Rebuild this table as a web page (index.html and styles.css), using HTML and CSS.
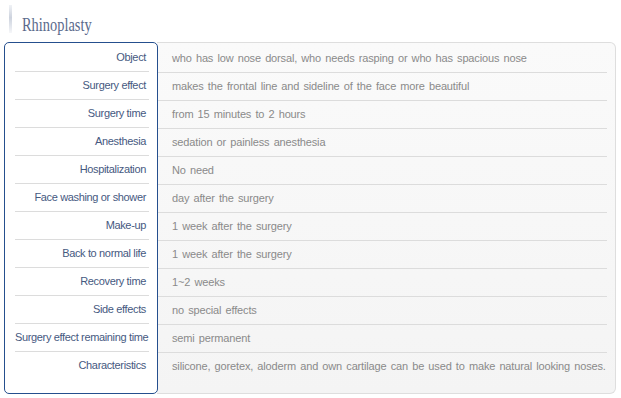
FILE: index.html
```html
<!DOCTYPE html>
<html>
<head>
<meta charset="utf-8">
<link rel="stylesheet" href="styles.css">
</head>
<body>
<div class="page">
  <h2 class="title"><span class="accent"></span><span class="title-text">Rhinoplasty</span></h2>
  <div class="table">
    <ul class="labels">
      <li>Object</li>
      <li>Surgery effect</li>
      <li>Surgery time</li>
      <li>Anesthesia</li>
      <li>Hospitalization</li>
      <li>Face washing or shower</li>
      <li>Make-up</li>
      <li>Back to normal life</li>
      <li>Recovery time</li>
      <li>Side effects</li>
      <li>Surgery effect remaining time</li>
      <li>Characteristics</li>
    </ul>
    <ul class="values">
      <li>who has low nose dorsal, who needs rasping or who has spacious nose</li>
      <li>makes the frontal line and sideline of the face more beautiful</li>
      <li>from 15 minutes to 2 hours</li>
      <li>sedation or painless anesthesia</li>
      <li>No need</li>
      <li>day after the surgery</li>
      <li>1 week after the surgery</li>
      <li>1 week after the surgery</li>
      <li>1~2 weeks</li>
      <li>no special effects</li>
      <li>semi permanent</li>
      <li>silicone, goretex, aloderm and own cartilage can be used to make natural looking noses.</li>
    </ul>
  </div>
</div>
</body>
</html>
```

FILE: styles.css
```css
html, body {
  margin: 0;
  padding: 0;
  background: #ffffff;
}
.page {
  width: 621px;
  height: 398px;
  padding: 5px 0 0 4px;
  box-sizing: border-box;
}
.title {
  margin: 0;
  height: 37px;
  display: flex;
  align-items: flex-start;
  font-family: "Liberation Serif", serif;
  font-weight: normal;
  font-size: 18px;
  line-height: 20px;
  color: #5b6a8c;
}
.accent {
  width: 3px;
  height: 28px;
  margin: 0 10px 0 5px;
  background: linear-gradient(to bottom, #f0f2f6, #cdd3de 45%, #e6e9ef 80%, #f6f7f9);
}
.title-text {
  display: inline-block;
  padding-top: 10px;
  transform: scaleX(0.8);
  transform-origin: left top;
}
.table {
  display: flex;
  width: 612px;
  height: 352px;
}
ul {
  list-style: none;
  margin: 0;
  padding: 0;
}
.labels {
  width: 154px;
  box-sizing: border-box;
  border: 1.5px solid #254f8e;
  border-radius: 5px;
  background: #ffffff;
  padding: 1px 8px 0 10px;
  position: relative;
  z-index: 1;
}
.labels li {
  height: 27px;
  line-height: 27px;
  border-bottom: 1px solid #dcdcdc;
  text-align: right;
  padding-right: 3px;
  font-family: "Liberation Sans", Arial, sans-serif;
  font-size: 11px;
  letter-spacing: -0.35px;
  color: #46597f;
  white-space: nowrap;
}
.values {
  flex: 1;
  box-sizing: border-box;
  border: 1px solid #dedede;
  border-left: none;
  border-radius: 0 6px 6px 0;
  background: linear-gradient(to bottom, #fafafa, #f4f4f4);
  padding: 2px 8px 0 1px;
  margin-left: -1px;
}
.values li {
  height: 27px;
  line-height: 27px;
  border-bottom: 1px solid #dcdcdc;
  padding-left: 14px;
  font-family: "Liberation Sans", Arial, sans-serif;
  font-size: 11px;
  letter-spacing: -0.15px;
  word-spacing: 1.3px;
  color: #8a8a8a;
  white-space: nowrap;
}
.labels li:last-child, .values li:last-child {
  border-bottom: none;
}
```
